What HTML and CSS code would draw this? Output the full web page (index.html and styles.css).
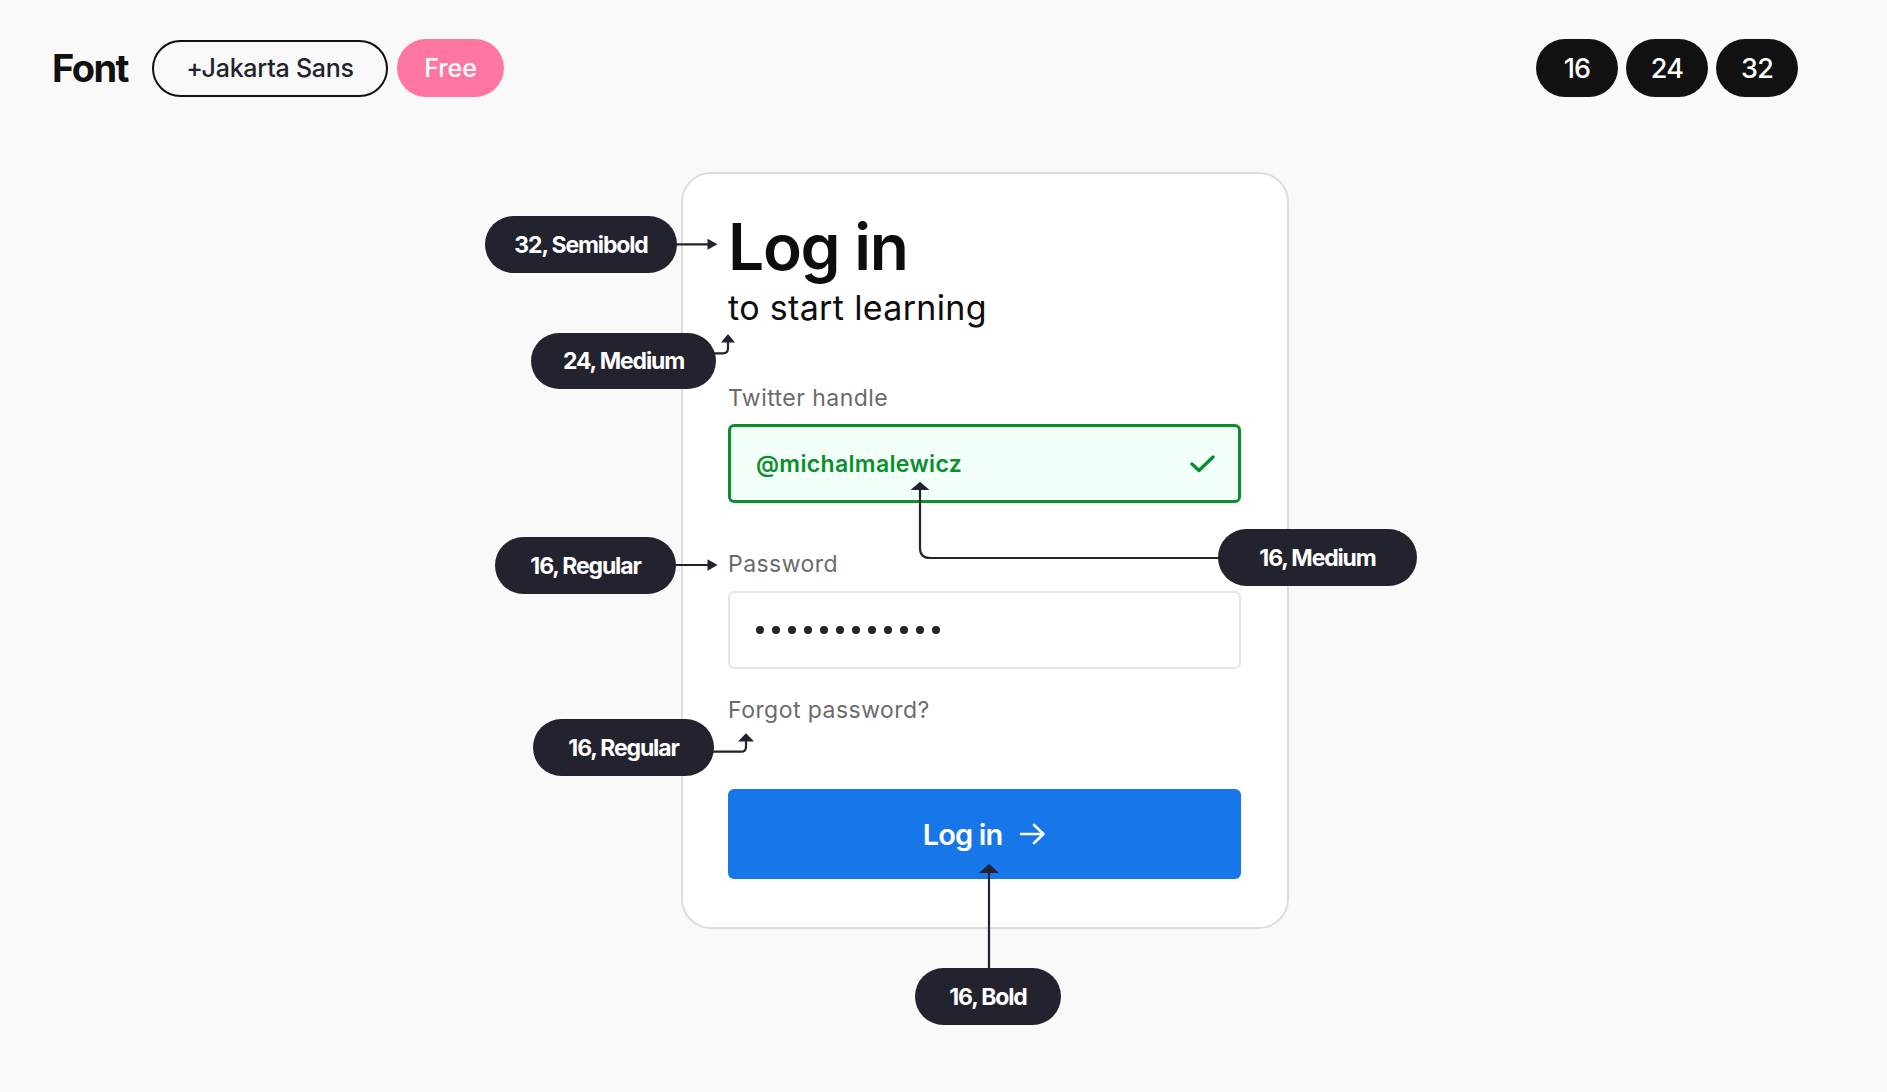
FILE: index.html
```html
<!DOCTYPE html>
<html lang="en">
<head>
<meta charset="utf-8">
<title>Font – Jakarta Sans</title>
<link rel="stylesheet" href="styles.css">
</head>
<body>
<header class="top">
  <div class="brand">
    <span class="brand-title">Font</span>
    <span class="pill-outline">+Jakarta Sans</span>
    <span class="pill-free">Free</span>
  </div>
  <div class="sizes">
    <span class="size-pill">16</span>
    <span class="size-pill">24</span>
    <span class="size-pill">32</span>
  </div>
</header>

<main class="stage-wrap">
  <div class="stage">
    <section class="card">
      <h1 class="title">Log in</h1>
      <p class="subtitle">to start learning</p>

      <label class="field-label">Twitter handle</label>
      <div class="input input-valid">
        <span class="handle">@michalmalewicz</span>
        <svg class="check" width="25" height="18" viewBox="0 0 25 18" aria-hidden="true">
          <polyline points="2,9 9,15.5 23,2" fill="none" stroke="#0b8f2c" stroke-width="3.4" stroke-linecap="round" stroke-linejoin="round"/>
        </svg>
      </div>

      <label class="field-label field-label-gap">Password</label>
      <div class="input input-plain">
        <span class="dots"><i></i><i></i><i></i><i></i><i></i><i></i><i></i><i></i><i></i><i></i><i></i><i></i></span>
      </div>

      <a class="forgot">Forgot password?</a>

      <button class="btn">
        <span>Log in</span>
        <svg width="27" height="22" viewBox="0 0 27 22" aria-hidden="true">
          <path d="M2 11 H24.5 M15 2 L24.5 11 L15 20" fill="none" stroke="#fff" stroke-width="2.6" stroke-linecap="round" stroke-linejoin="round"/>
        </svg>
      </button>
    </section>

    <svg class="connectors" width="608" height="760" viewBox="0 0 608 760" aria-hidden="true">
      <g fill="none" stroke="#23222f" stroke-width="2.2">
        <path d="M-6 72.3 H27"/>
        <path d="M33 181.3 H42 Q47 181.3 47 176.3 V168"/>
        <path d="M-6 393 H27"/>
        <path d="M540 386 H249 Q239 386 239 376 V316"/>
        <path d="M31 579.7 H60 Q65 579.7 65 574.7 V567"/>
        <path d="M308 797 V698"/>
      </g>
      <g fill="#23222f">
        <polygon points="26.5,66.8 36.5,72.3 26.5,77.8"/>
        <polygon points="40,170.5 47,162 54,170.5"/>
        <polygon points="26.5,387.3 36.5,393 26.5,398.7"/>
        <polygon points="229.5,318 239,309.7 248.5,318"/>
        <polygon points="57,569.5 65,561.3 73,569.5"/>
        <polygon points="298,701 308,692 318,701"/>
      </g>
    </svg>

    <span class="note note-title">32, Semibold</span>
    <span class="note note-sub">24, Medium</span>
    <span class="note note-label">16, Regular</span>
    <span class="note note-input">16, Medium</span>
    <span class="note note-forgot">16, Regular</span>
    <span class="note note-btn">16, Bold</span>
  </div>
</main>
</body>
</html>
```
FILE: styles.css
```css
* { box-sizing: border-box; }

html, body {
  margin: 0;
  padding: 0;
}

body {
  background: #f9f9f9;
  font-family: "Inter", "Liberation Sans", sans-serif;
  color: #111;
  min-height: 100vh;
}

/* ---------- header ---------- */
.top {
  display: flex;
  justify-content: space-between;
  align-items: center;
  padding: 39px 89px 0 52px;
}

.brand {
  display: flex;
  align-items: center;
}

.brand-title {
  font-size: 38px;
  font-weight: 700;
  letter-spacing: -0.04em;
  line-height: 1;
  margin-right: 24px;
}

.pill-outline {
  height: 57px;
  width: 236px;
  border: 2px solid #111;
  border-radius: 29px;
  display: flex;
  align-items: center;
  justify-content: center;
  font-size: 25px;
  letter-spacing: -0.01em;
  color: #23222f;
  font-weight: 500;
  margin-right: 9px;
}

.pill-free {
  height: 58px;
  width: 107px;
  border-radius: 29px;
  background: #ff77a0;
  color: #fff;
  display: flex;
  align-items: center;
  justify-content: center;
  font-size: 25px;
  font-weight: 500;
  letter-spacing: 0;
}

.sizes {
  display: flex;
  gap: 8px;
}

.size-pill {
  width: 82px;
  height: 58px;
  border-radius: 29px;
  background: #111;
  color: #fff;
  display: flex;
  align-items: center;
  justify-content: center;
  font-size: 27px;
  font-weight: 500;
  letter-spacing: -0.03em;
}

/* ---------- stage ---------- */
.stage-wrap {
  padding: 75px 0 0 681px;
}

.stage {
  position: relative;
  width: 608px;
}

.card {
  width: 608px;
  background: #fff;
  border: 2px solid #dddddd;
  border-radius: 30px;
  padding: 40px 46px 48px 45px;
  display: flex;
  flex-direction: column;
}

.title {
  margin: 0;
  font-size: 64px;
  line-height: 66px;
  font-weight: 600;
  letter-spacing: -0.02em;
  color: #0d0d0d;
}

.subtitle {
  margin: 12px 0 0;
  font-size: 34px;
  line-height: 32px;
  font-weight: 400;
  letter-spacing: 0.01em;
  color: #0d0d0d;
}

.field-label {
  margin-top: 63px;
  font-size: 23px;
  line-height: 22px;
  color: #6b6b6b;
  letter-spacing: 0.02em;
}

.field-label-gap {
  margin-top: 50px;
}

.input {
  display: flex;
  align-items: center;
  justify-content: space-between;
  border-radius: 6px;
}

.input-valid {
  margin-top: 15px;
  height: 79px;
  border: 3px solid #0b8f2c;
  background: #f3fff9;
  padding: 0 23px 0 25px;
}

.handle {
  font-size: 23px;
  line-height: 22px;
  font-weight: 600;
  color: #0b8f2c;
  letter-spacing: 0.015em;
}

.check { display: block; }

.input-plain {
  margin-top: 16px;
  height: 78px;
  border: 2px solid #e6e6e6;
  padding: 0 26px;
}

.dots {
  display: flex;
  gap: 8px;
}

.dots i {
  width: 8px;
  height: 8px;
  border-radius: 50%;
  background: #222;
}

.forgot {
  margin-top: 30px;
  font-size: 23px;
  line-height: 22px;
  color: #6b6b6b;
  letter-spacing: 0.02em;
}

.btn {
  margin-top: 68px;
  height: 90px;
  border: 0;
  border-radius: 6px;
  background: #1877e8;
  color: #fff;
  font-family: inherit;
  font-size: 29px;
  font-weight: 600;
  letter-spacing: -0.03em;
  display: flex;
  align-items: center;
  justify-content: center;
  gap: 17px;
}

.btn svg { display: block; }

/* ---------- annotations ---------- */
.connectors {
  position: absolute;
  left: 0;
  top: 0;
  overflow: visible;
  pointer-events: none;
}

.note {
  position: absolute;
  height: 57px;
  border-radius: 29px;
  background: #23222f;
  color: #fff;
  display: flex;
  align-items: center;
  justify-content: center;
  font-size: 23px;
  font-weight: 700;
  letter-spacing: -0.05em;
  white-space: nowrap;
}

.note-title  { left: -196px; top: 44px;  width: 192px; }
.note-sub    { left: -150px; top: 161px; width: 185px; height: 56px; }
.note-label  { left: -186px; top: 365px; width: 181px; }
.note-input  { left: 537px;  top: 357px; width: 199px; }
.note-forgot { left: -148px; top: 547px; width: 181px; }
.note-btn    { left: 234px;  top: 796px; width: 146px; }
```
